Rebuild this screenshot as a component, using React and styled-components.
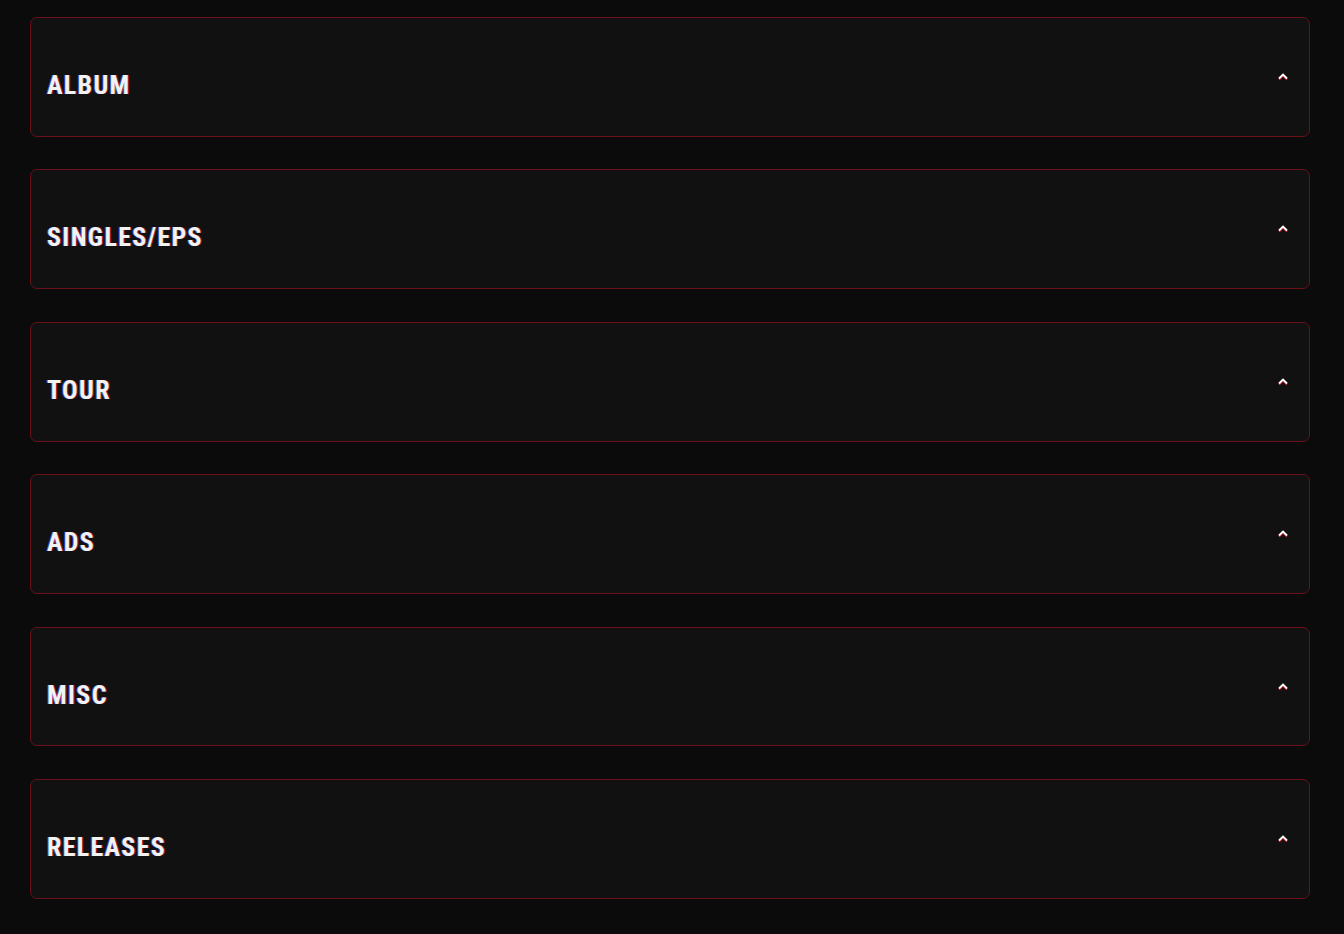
import React from "react";
import styled, { createGlobalStyle } from "styled-components";

const GlobalStyle = createGlobalStyle`
  html, body {
    margin: 0;
    padding: 0;
    background: #0b0b0b;
  }
`;

const Page = styled.div`
  box-sizing: border-box;
  min-height: 934px;
  padding: 17px 34px 0 30px;
  display: flex;
  flex-direction: column;
  gap: 32.5px;
`;

const Section = styled.div`
  box-sizing: border-box;
  height: 119.9px;
  border: 1px solid #6a1018;
  border-radius: 7px;
  background: #111112;
  display: flex;
  align-items: center;
  justify-content: space-between;
  padding: 0 20px 0 16px;
`;

const Title = styled.h2`
  margin: 16px 0 0;
  font-family: "Roboto Condensed", "Liberation Sans Narrow", "DejaVu Sans Condensed", Roboto, sans-serif;
  font-stretch: condensed;
  font-weight: 700;
  font-size: 26px;
  letter-spacing: 1.3px;
  color: #f2f2f2;
  text-shadow: -1px 0 rgba(70, 110, 255, 0.7), 1px 0 rgba(220, 30, 40, 0.7);
`;

const Chevron = styled.svg`
  width: 12px;
  height: 8px;
  margin-top: -2px;
  overflow: visible;
`;

const SECTIONS = ["ALBUM", "SINGLES/EPS", "TOUR", "ADS", "MISC", "RELEASES"];

function ChevronUp() {
  return (
    <Chevron viewBox="0 0 12 8">
      <path d="M2 6.5 L6 2.5 L10 6.5" fill="none" stroke="#d81e2c" strokeWidth="2" transform="translate(0 1)" />
      <path d="M2 6.5 L6 2.5 L10 6.5" fill="none" stroke="#ffffff" strokeWidth="1.8" strokeLinejoin="miter" />
    </Chevron>
  );
}

export default function App() {
  return (
    <>
      <GlobalStyle />
      <Page>
        {SECTIONS.map((name) => (
          <Section key={name}>
            <Title>{name}</Title>
            <ChevronUp />
          </Section>
        ))}
      </Page>
    </>
  );
}
